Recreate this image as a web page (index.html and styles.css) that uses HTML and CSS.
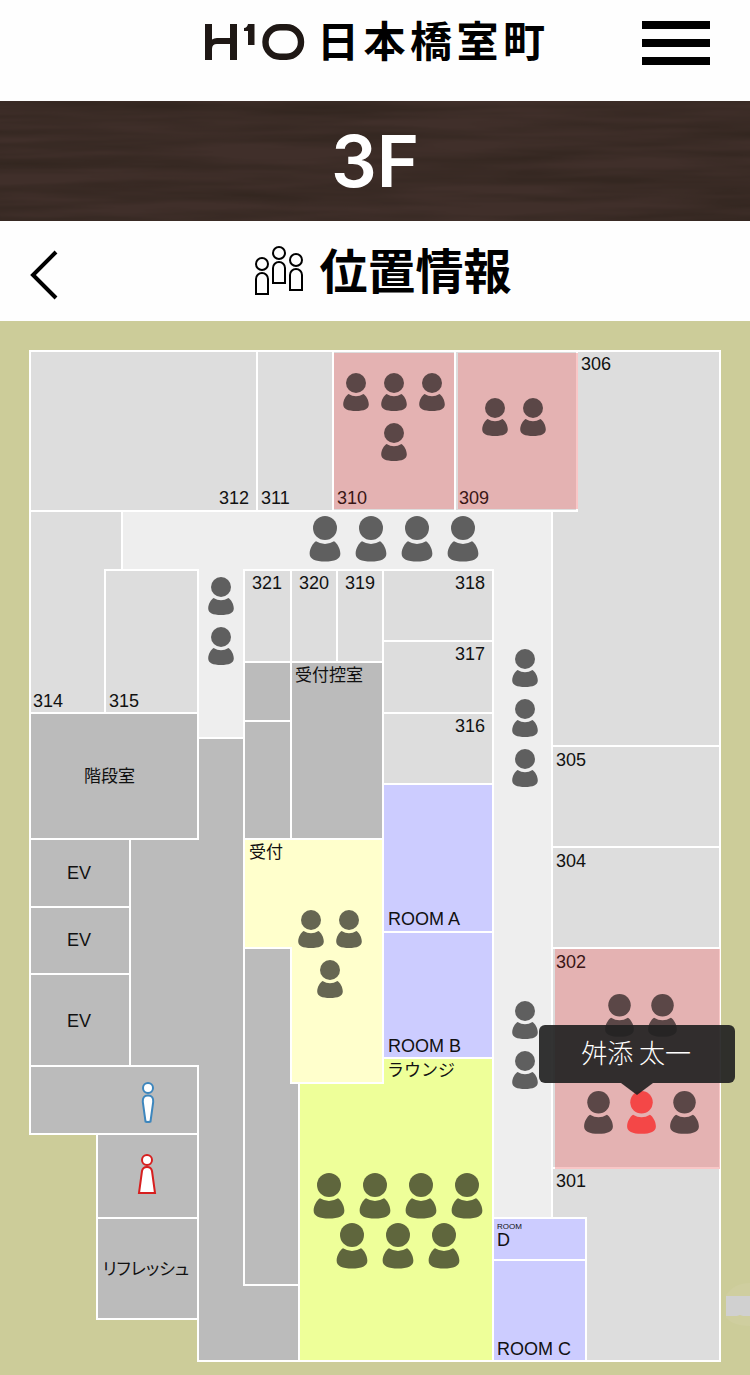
FILE: index.html
```html
<!DOCTYPE html>
<html lang="ja">
<head>
<meta charset="utf-8">
<meta name="viewport" content="width=device-width, initial-scale=1">
<title>H1O 日本橋室町 3F 位置情報</title>
<link rel="stylesheet" href="styles.css">
</head>
<body>
<header class="site-header">
  <div class="brand">
    <svg class="brand-mark" viewBox="0 0 100 38" role="img" aria-label="H1O">
      <path d="M0 0h7v15.500q2-1.500 5-1.500h13V0h7v36h-7V20H12q-5 0-5 5v11H0z"/>
      <path d="M43 0h6.500v21h-6.500V7h-4V4q3 0 4-4z"/>
      <rect x="60.500" y="3.200" width="35.500" height="29.500" rx="14.500" fill="none" stroke="currentColor" stroke-width="6.400"/>
    </svg>
    <span class="brand-name">日本橋室町</span>
  </div>
  <button class="menu-button" type="button" aria-label="メニュー">
    <span class="menu-bar"></span><span class="menu-bar"></span><span class="menu-bar"></span>
  </button>
</header>

<div class="floor-banner">
  <svg class="wood" aria-hidden="true">
    <filter id="grain" x="0" y="0" width="100%" height="100%" color-interpolation-filters="sRGB">
      <feTurbulence type="fractalNoise" baseFrequency="0.005 0.07" numOctaves="3" seed="8"/>
      <feColorMatrix values="0 0 0 0 0.2  0 0 0 0 0.15  0 0 0 0 0.125  2 0 0 0 -0.6"/>
    </filter>
    <rect width="100%" height="100%" filter="url(#grain)"/>
  </svg>
  <h1 class="floor-name">3F</h1>
</div>

<div class="page-title">
  <a class="back-link" href="#" aria-label="戻る">
    <svg class="back-icon" viewBox="0 0 28 50" aria-hidden="true"><path d="M26 2L3 25l23 23"/></svg>
  </a>
  <h2 class="page-heading">
    <svg class="people-icon" viewBox="0 0 50 50" aria-hidden="true">
      <circle cx="8" cy="18" r="6"/><path d="M2 48V33a6 6 0 0 1 12 0v15z"/>
      <circle cx="25" cy="7" r="6"/><path d="M19 37V22a6 6 0 0 1 12 0v15z"/>
      <circle cx="42" cy="14" r="6"/><path d="M36 44V29a6 6 0 0 1 12 0v15z"/>
    </svg>
    <span class="page-heading-text">位置情報</span>
  </h2>
</div>

<main class="plan">
  <svg class="plan-map" viewBox="0 321 750 1054">
    <defs>
      <g id="person">
        <circle cx="0" cy="10" r="10"/>
        <path d="M-7.500 21Q0 25.500 7.500 21C10 22.500 12.800 27 12.800 31.500C12.800 36 8 38 0 38S-12.800 36-12.800 31.500C-12.800 27-10 22.500-7.500 21z"/>
      </g>
    </defs>

    <g class="rooms">
      <path class="corridor" d="M122 511H552V1218H493V570H244V738H198V570H122z"/>
      <path class="room" d="M30 351H257V511H30z"/>
      <path class="room" d="M257 351H333V511H257z"/>
      <path class="room" d="M333 351H455V511H333z"/>
      <path class="room" d="M455 351H577V511H455z"/>
      <path class="room" d="M577 351H720V746H552V511H577z"/>
      <path class="room" d="M552 746H720V847H552z"/>
      <path class="room" d="M552 847H720V948H552z"/>
      <path class="room" d="M552 948H720V1168H552z"/>
      <path class="room" d="M552 1168H720V1361H586V1218H552z"/>
      <path class="room" d="M30 511H122V570H105V713H30z"/>
      <path class="room" d="M105 570H198V713H105z"/>
      <path class="room" d="M244 570H291V662H244z"/>
      <path class="room" d="M291 570H337V662H291z"/>
      <path class="room" d="M337 570H383V662H337z"/>
      <path class="room" d="M383 570H493V641H383z"/>
      <path class="room" d="M383 641H493V713H383z"/>
      <path class="room" d="M383 713H493V784H383z"/>
      <path class="service" d="M198 738H244V948H244V1285H299V1361H198V1066H130V839H198z"/>
      <path class="service" d="M30 713H198V839H30z"/>
      <path class="service" d="M30 839H130V907H30z"/>
      <path class="service" d="M30 907H130V974H30z"/>
      <path class="service" d="M30 974H130V1066H30z"/>
      <path class="service" d="M30 1066H198V1134H30z"/>
      <path class="service" d="M97 1134H198V1218H97z"/>
      <path class="service" d="M97 1218H198V1319H97z"/>
      <path class="service" d="M244 662H291V721H244z"/>
      <path class="service" d="M244 721H291V839H244z"/>
      <path class="service" d="M291 662H383V839H291z"/>
      <path class="service" d="M244 948H299V1285H244z"/>
      <path class="lounge" d="M299 1083H383V1058H493V1361H299z"/>
      <path class="reception" d="M244 839H383V1083H291V948H244z"/>
      <path class="meeting" d="M383 784H493V932H383z"/>
      <path class="meeting" d="M383 932H493V1058H383z"/>
      <path class="meeting" d="M493 1218H586V1260H493z"/>
      <path class="meeting" d="M493 1260H586V1361H493z"/>
    </g>

    <g class="occupied">
      <rect x="334" y="353" width="120" height="156"/>
      <rect x="458" y="353" width="120" height="156"/>
      <rect x="555" y="949" width="165" height="220"/>
    </g>

    <g class="labels">
      <text x="219" y="504">312</text>
      <text x="261" y="504">311</text>
      <text class="in-use" x="337" y="504">310</text>
      <text class="in-use" x="459" y="504">309</text>
      <text x="581" y="370">306</text>
      <text x="556" y="766">305</text>
      <text x="556" y="867">304</text>
      <text class="in-use" x="556" y="968">302</text>
      <text x="556" y="1187">301</text>
      <text x="33" y="707">314</text>
      <text x="109" y="707">315</text>
      <text class="mid" x="267" y="589">321</text>
      <text class="mid" x="314" y="589">320</text>
      <text class="mid" x="360" y="589">319</text>
      <text class="end" x="485" y="589">318</text>
      <text class="end" x="485" y="660">317</text>
      <text class="end" x="485" y="732">316</text>
      <text x="388" y="925">ROOM A</text>
      <text x="388" y="1052">ROOM B</text>
      <text class="tiny" x="497" y="1229">ROOM</text>
      <text x="497" y="1246">D</text>
      <text x="497" y="1355">ROOM C</text>
      <text class="mid" x="79" y="879">EV</text>
      <text class="mid" x="79" y="946">EV</text>
      <text class="mid" x="79" y="1027">EV</text>
      <text class="ja" x="295" y="681">受付控室</text>
      <text class="ja" x="249" y="858">受付</text>
      <text class="ja" x="84" y="782">階段室</text>
      <text class="ja" x="387" y="1076">ラウンジ</text>
      <text class="ja kana mid" x="146" y="1275">リフレッシュ</text>
    </g>

    <g class="restroom men">
      <circle cx="148" cy="1088" r="5"/>
      <path d="M148 1095.500c4 0 5.500 2.500 5.200 6.500l-2.700 19.500q-2.500 1-5 0l-2.700-19.500c-.3-4 1.200-6.500 5.200-6.500z"/>
    </g>
    <g class="restroom women">
      <circle cx="147" cy="1160" r="5"/>
      <path d="M147 1167c3 0 4.500 1.500 5 4l3 22h-16l3-22c.5-2.500 2-4 5-4z"/>
    </g>

    <g class="people">
      <use href="#person" transform="translate(356 373)"/>
      <use href="#person" transform="translate(394 373)"/>
      <use href="#person" transform="translate(432 373)"/>
      <use href="#person" transform="translate(394 423)"/>
      <use href="#person" transform="translate(495 398)"/>
      <use href="#person" transform="translate(533 398)"/>
      <use href="#person" transform="translate(325 516) scale(1.2)"/>
      <use href="#person" transform="translate(371 516) scale(1.2)"/>
      <use href="#person" transform="translate(417 516) scale(1.2)"/>
      <use href="#person" transform="translate(463 516) scale(1.2)"/>
      <use href="#person" transform="translate(221 577)"/>
      <use href="#person" transform="translate(221 627)"/>
      <use href="#person" transform="translate(525 649)"/>
      <use href="#person" transform="translate(525 699)"/>
      <use href="#person" transform="translate(525 749)"/>
      <use href="#person" transform="translate(311 910)"/>
      <use href="#person" transform="translate(349 910)"/>
      <use href="#person" transform="translate(330 960)"/>
      <use href="#person" transform="translate(525 1001)"/>
      <use href="#person" transform="translate(525 1051)"/>
      <use href="#person" transform="translate(619.500 994) scale(1.125)"/>
      <use href="#person" transform="translate(662.500 994) scale(1.125)"/>
      <use href="#person" transform="translate(598.500 1091) scale(1.125)"/>
      <use href="#person" class="selected" transform="translate(641.500 1091) scale(1.125)"/>
      <use href="#person" transform="translate(684.500 1091) scale(1.125)"/>
      <use href="#person" transform="translate(329 1173) scale(1.2)"/>
      <use href="#person" transform="translate(375 1173) scale(1.2)"/>
      <use href="#person" transform="translate(421 1173) scale(1.2)"/>
      <use href="#person" transform="translate(467 1173) scale(1.2)"/>
      <use href="#person" transform="translate(352 1223) scale(1.2)"/>
      <use href="#person" transform="translate(398 1223) scale(1.2)"/>
      <use href="#person" transform="translate(444 1223) scale(1.2)"/>
    </g>

    <g class="edge-handle">
      <path class="edge-halo" d="M726 1295Q734 1283 750 1283V1326Q734 1326 726 1318z"/>
      <path class="edge-tab" d="M726 1296h24v20h-7l-3-1-3 1h-11z"/>
    </g>
  </svg>
  <div class="tooltip" role="tooltip">舛添&nbsp;太一</div>
</main>
</body>
</html>
```

FILE: styles.css
```css
* {
  box-sizing: border-box;
}

body {
  margin: 0;
  background: #fefefe;
  color: #000;
  font-family: "Noto Sans CJK JP", "Liberation Sans", sans-serif;
}

.site-header {
  display: grid;
  grid-template-columns: 1fr auto 1fr;
  align-items: center;
  padding: 16px 40px 32px;
}

.brand {
  grid-column: 2;
  display: flex;
  align-items: center;
  gap: 12px;
}

.brand-mark {
  width: 100px;
  height: 38px;
  color: #1f1815;
  fill: currentColor;
}

.brand-name {
  width: 228px;
  padding-bottom: 8px;
  font-size: 42px;
  font-weight: 700;
  line-height: 45px;
  text-align: justify;
  text-align-last: justify;
}

.menu-button {
  justify-self: end;
  display: flex;
  flex-direction: column;
  gap: 10px;
  width: 68px;
  padding: 0;
  border: 0;
  background: none;
}

.menu-bar {
  height: 8px;
  background: #000;
}

.floor-banner {
  position: relative;
  background: #402f2a;
}

.wood {
  position: absolute;
  inset: 0;
  width: 100%;
  height: 100%;
}

.floor-name {
  position: relative;
  margin: 0;
  color: #fff;
  font-family: Inter, "Liberation Sans", sans-serif;
  font-size: 72px;
  font-weight: 600;
  line-height: 120px;
  text-align: center;
}

.page-title {
  display: grid;
  grid-template-columns: 1fr auto 1fr;
  align-items: center;
  padding: 0 30px;
}

.back-link {
  display: flex;
  padding-top: 8px;
}

.back-icon {
  width: 28px;
  height: 50px;
  fill: none;
  stroke: #000;
  stroke-width: 4;
}

.page-heading {
  display: flex;
  align-items: center;
  gap: 15px;
  margin: 0;
  padding-left: 16px;
  font-size: 48px;
  font-weight: 700;
  line-height: 94px;
}

.page-heading-text {
  padding-bottom: 6px;
}

.people-icon {
  width: 50px;
  height: 50px;
  fill: none;
  stroke: #000;
  stroke-width: 2;
}

.plan {
  position: relative;
  background: #cc9;
}

.plan-map {
  display: block;
  width: 100%;
  height: auto;
}

.rooms {
  stroke: #fff;
  stroke-width: 2;
}

.corridor {
  fill: #eee;
}

.room {
  fill: #ddd;
}

.service {
  fill: #bbb;
}

.reception {
  fill: #ffc;
}

.lounge {
  fill: #ef9;
}

.meeting {
  fill: #ccf;
}

.labels {
  font-family: "Liberation Sans", Arial, sans-serif;
  font-size: 18px;
  fill: #111;
}

.in-use {
  fill: #3a1616;
}

.mid {
  text-anchor: middle;
}

.end {
  text-anchor: end;
}

.tiny {
  font-size: 8px;
}

.ja {
  font-family: "Noto Sans CJK JP", sans-serif;
  font-size: 17px;
}

.kana {
  font-feature-settings: "palt";
}

.restroom {
  fill: #fff;
  stroke-width: 2;
}

.men {
  stroke: #3d86bd;
}

.women {
  stroke: #d71f1f;
}

.occupied {
  fill: rgba(240, 114, 114, 0.4);
}

.people {
  fill: rgba(0, 0, 0, 0.6);
}

.selected {
  fill: rgba(255, 0, 0, 0.6);
}

.edge-halo {
  fill: #cfce9f;
}

.edge-tab {
  fill: #d0d0d0;
}

.tooltip {
  position: absolute;
  right: 2%;
  bottom: 27.7%;
  padding: 0 44px 4px 42px;
  border-radius: 6px;
  background: rgba(34, 34, 34, 0.92);
  color: #fff;
  font-size: 26px;
  font-weight: 300;
  line-height: 54px;
}

.tooltip::after {
  content: "";
  position: absolute;
  top: 100%;
  left: 50%;
  margin-left: -16px;
  border: 16px solid transparent;
  border-top: 12px solid rgba(34, 34, 34, 0.92);
  border-bottom: 0;
}
```
